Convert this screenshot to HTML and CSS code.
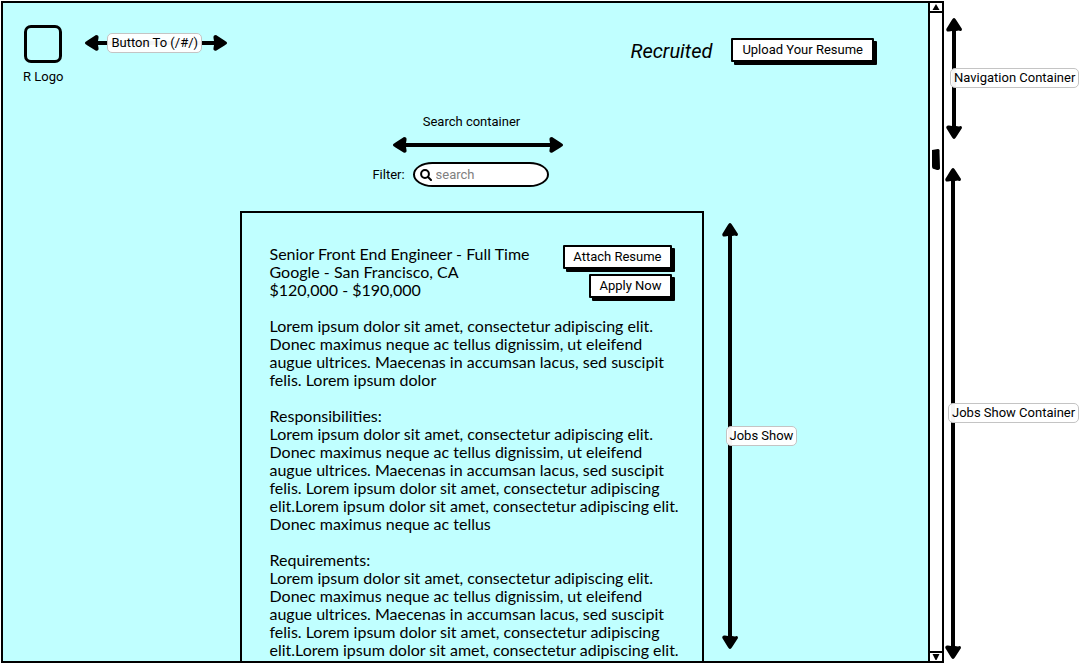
FILE: index.html
```html
<!DOCTYPE html>
<html lang="en">
<head>
<meta charset="utf-8">
<title>Recruited - Jobs Show</title>
<link rel="stylesheet" href="styles.css">
</head>
<body>
<svg class="defs" aria-hidden="true">
  <symbol id="head-up" viewBox="0 0 16 15"><path d="M8 0C9 0 9.500 1 10.500 2.500L16 11Q16 14 13 12.500L10 13Q8 15 6 13L3 13.500Q0 14 .3 11L5.500 2.500C6.500 1 7 0 8 0Z"/></symbol>
  <symbol id="head-left" viewBox="0 0 15 16"><path d="M0 8C0 7 1 6.500 2.500 5.500L11 0Q14 0 13.500 3L13 6Q15 8 13 10L13.500 13Q14 16 11 15.700L2.500 10.500C1 9.500 0 9 0 8Z"/></symbol>
</svg>
<div class="page">
  <div class="window">
    <main class="pane">
      <header class="nav">
        <div class="logo">
          <div class="logo-box"></div>
          <span>R Logo</span>
        </div>
        <div class="arrow arrow-h arrow-home">
          <svg class="head-h"><use href="#head-left"/></svg>
          <div class="shaft"></div>
          <svg class="head-h flip-h"><use href="#head-left"/></svg>
          <span class="tag tag-home">Button To (/#/)</span>
        </div>
        <div class="brand">Recruited</div>
        <button class="btn" type="button">Upload Your Resume</button>
      </header>

      <section class="search">
        <div>Search container</div>
        <div class="arrow arrow-h arrow-search">
          <svg class="head-h"><use href="#head-left"/></svg>
          <div class="shaft"></div>
          <svg class="head-h flip-h"><use href="#head-left"/></svg>
        </div>
        <div class="filter">
          <label for="filter">Filter:</label>
          <div class="field">
            <svg class="glass" viewBox="0 0 12 12"><circle cx="5" cy="5" r="3.900"/><path d="M8 8L11 11"/></svg>
            <input id="filter" type="text" placeholder="search">
          </div>
        </div>
      </section>

      <section class="jobs">
        <article class="card">
          <div class="card-top">
            <div>Senior Front End Engineer - Full Time<br>Google - San Francisco, CA<br>$120,000 - $190,000</div>
            <div class="actions">
              <button class="btn" type="button">Attach Resume</button>
              <button class="btn" type="button">Apply Now</button>
            </div>
          </div>
          <p>Lorem ipsum dolor sit amet, consectetur adipiscing elit.<br>Donec maximus neque ac tellus dignissim, ut eleifend<br>augue ultrices. Maecenas in accumsan lacus, sed suscipit<br>felis. Lorem ipsum dolor</p>
          <p>Responsibilities:<br>Lorem ipsum dolor sit amet, consectetur adipiscing elit.<br>Donec maximus neque ac tellus dignissim, ut eleifend<br>augue ultrices. Maecenas in accumsan lacus, sed suscipit<br>felis. Lorem ipsum dolor sit amet, consectetur adipiscing<br>elit.Lorem ipsum dolor sit amet, consectetur adipiscing elit.<br>Donec maximus neque ac tellus</p>
          <p>Requirements:<br>Lorem ipsum dolor sit amet, consectetur adipiscing elit.<br>Donec maximus neque ac tellus dignissim, ut eleifend<br>augue ultrices. Maecenas in accumsan lacus, sed suscipit<br>felis. Lorem ipsum dolor sit amet, consectetur adipiscing<br>elit.Lorem ipsum dolor sit amet, consectetur adipiscing elit.</p>
        </article>
        <div class="arrow arrow-v arrow-jobs">
          <svg class="head-v"><use href="#head-up"/></svg>
          <div class="shaft"></div>
          <svg class="head-v flip-v"><use href="#head-up"/></svg>
          <span class="tag tag-jobs">Jobs Show</span>
        </div>
      </section>
    </main>
    <div class="scrollbar">
      <button class="step" type="button" aria-label="Scroll up"><svg viewBox="0 0 8 6"><path d="M4 0L7.500 6H.5Z"/></svg></button>
      <div class="track"><svg class="thumb" viewBox="0 0 8 21"><path d="M0 1L6 0Q8 0 7.500 3L8 19Q8 21 5 21L2 20Q0 20 0 17Z"/></svg></div>
      <button class="step" type="button" aria-label="Scroll down"><svg viewBox="0 0 8 6"><path d="M.5 0H7.500L4.500 6H3.500Z"/></svg></button>
    </div>
  </div>

  <aside class="notes">
    <div class="arrow arrow-v arrow-nav">
      <svg class="head-v"><use href="#head-up"/></svg>
      <div class="shaft"></div>
      <svg class="head-v flip-v"><use href="#head-up"/></svg>
      <span class="tag tag-nav">Navigation Container</span>
    </div>
    <div class="arrow arrow-v arrow-container">
      <svg class="head-v"><use href="#head-up"/></svg>
      <div class="shaft"></div>
      <svg class="head-v flip-v"><use href="#head-up"/></svg>
      <span class="tag tag-container">Jobs Show Container</span>
    </div>
  </aside>
</div>
</body>
</html>
```
FILE: styles.css
```css
* { box-sizing: border-box; }
body {
  margin: 0;
  background: #fff;
  color: #000;
  font: 13px/18px Roboto, "Open Sans", sans-serif;
}
.defs { position: absolute; width: 0; height: 0; }
.page {
  display: grid;
  grid-template-columns: 1fr 137px;
  height: 100vh;
  padding-left: 1px;
  overflow: hidden;
}
.window {
  display: flex;
  min-height: 0;
  margin: 1px 0;
  border: 2px solid #000;
}
.pane {
  flex: 1;
  display: flex;
  flex-direction: column;
  min-width: 0;
  overflow: hidden;
  background: #c0ffff;
}

/* Navigation */
.nav {
  display: flex;
  align-items: flex-start;
  padding: 22px 54px 0 20px;
}
.logo {
  display: flex;
  flex-direction: column;
  align-items: center;
  gap: 5px;
}
.logo-box {
  width: 38px;
  height: 38px;
  border: 3px solid #000;
  border-radius: 7px;
}
.brand {
  margin: 17px 19px 0 auto;
  font-size: 20px;
  font-style: italic;
}
.nav .btn { margin-top: 13px; padding: 0 9px; }
.btn {
  height: 24px;
  padding: 0 8px;
  border: 2px solid #000;
  border-radius: 1px;
  background: #fff;
  box-shadow: 3px 3px 0 #000;
  color: #000;
  font: inherit;
  line-height: 18px;
  white-space: nowrap;
}

/* Double-headed arrows */
.arrow {
  position: relative;
  display: flex;
  align-items: center;
}
.arrow-v { flex-direction: column; width: 16px; }
.head-h { width: 15px; height: 16px; flex: none; }
.head-v { width: 16px; height: 15px; flex: none; }
.flip-h { transform: scaleX(-1); }
.flip-v { transform: scaleY(-1); }
.shaft { flex: 1; background: #000; }
.arrow-h .shaft { height: 4px; margin: 0 -2px; }
.arrow-v .shaft { width: 4px; margin: -2px 0; }
.tag {
  position: absolute;
  padding: 0 3px;
  border: 1px solid #c4c4c4;
  border-radius: 5px;
  background: rgba(255, 255, 255, .96);
  white-space: nowrap;
}
.arrow-home { width: 142px; margin: 10px 0 0 22px; }
.tag-home { left: 22px; }
.arrow-search { width: 170px; margin: 6px 0 0 12px; }
.tag-jobs { top: 203px; left: 4px; }
.tag-nav { top: 50px; left: 4px; }
.tag-container { top: 235px; left: 3px; }

/* Search */
.search {
  display: flex;
  flex-direction: column;
  align-items: center;
  padding: 27px 0 24px 12px;
}
.filter {
  display: flex;
  align-items: center;
  gap: 8px;
  margin: 9px 22px 0 0;
}
.field {
  display: flex;
  align-items: center;
  gap: 4px;
  width: 136px;
  height: 25px;
  padding: 0 5px;
  border: 2px solid #000;
  border-radius: 20px / 13px;
  background: #fff;
}
.glass {
  flex: none;
  width: 12px;
  height: 12px;
  fill: none;
  stroke: #000;
  stroke-width: 2;
  stroke-linecap: round;
}
.field input {
  width: 100%;
  min-width: 0;
  padding: 0;
  border: 0;
  outline: 0;
  background: none;
  font: inherit;
}
.field input::placeholder { color: #808080; opacity: 1; }

/* Job */
.jobs {
  flex: 1;
  display: grid;
  grid-template-columns: 1fr 464px 1fr;
  min-height: 0;
  padding-left: 12px;
}
.card {
  grid-column: 2;
  min-height: 0;
  padding: 32px 30px 0 28px;
  border: solid #000;
  border-width: 2px 2px 0;
  overflow: hidden;
  font: 16px/18px Lato, Roboto, sans-serif;
  white-space: nowrap;
}
.card-top { display: flex; justify-content: space-between; }
.actions {
  display: flex;
  flex-direction: column;
  align-items: flex-end;
  gap: 5px;
  height: 54px;
  font: 13px/18px Roboto, "Open Sans", sans-serif;
}
.card p { margin: 18px 0 0; }
.arrow-jobs { margin: 12px 0 12px 18px; }

/* Scrollbar */
.scrollbar {
  display: flex;
  flex-direction: column;
  width: 14px;
  border-left: 2px solid #000;
  background: #fff;
}
.step {
  display: flex;
  align-items: center;
  justify-content: center;
  height: 8px;
  padding: 0;
  border: 0;
  background: #fff;
}
.step svg { width: 8px; height: 6px; }
.track {
  flex: 1;
  padding: 136px 2px 0;
  border: solid #000;
  border-width: 2px 0;
}
.thumb { display: block; width: 8px; height: 21px; }

/* Annotations */
.notes {
  display: flex;
  flex-direction: column;
  gap: 29px;
  padding: 18px 0 5px 1px;
}
.arrow-nav { height: 121px; margin-left: 1px; }
.arrow-container { flex: 1; }
```
